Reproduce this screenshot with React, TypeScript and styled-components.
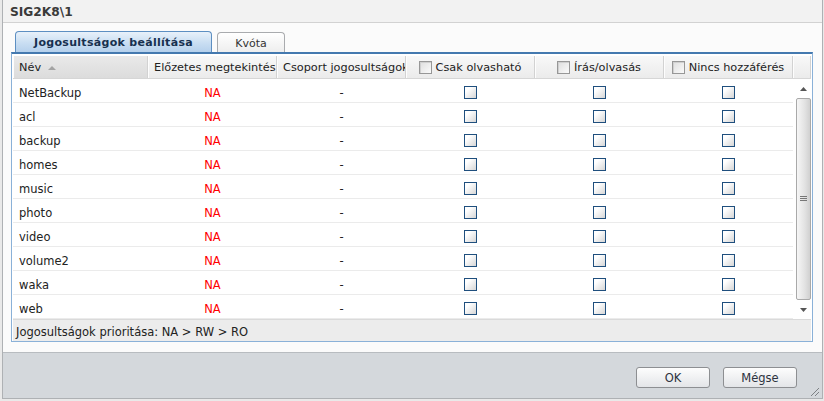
import React from "react";
import styled, { createGlobalStyle } from "styled-components";

const GlobalStyle = createGlobalStyle`
  html, body { margin: 0; padding: 0; background: #e9e9e9; }
  body { font-family: "DejaVu Sans", Verdana, sans-serif; font-size: 11.5px; color: #222; }
  * { box-sizing: border-box; }
`;

const Outer = styled.div`
  width: 824px;
  height: 401px;
  padding: 0 1px 2px 2px;
  background: #e9e9e9;
`;

const Frame = styled.div`
  height: 100%;
  display: flex;
  flex-direction: column;
  border: 1px solid #aeb1b4;
  border-top: none;
  background: #fbfbfb;
`;

const TitleBar = styled.div`
  height: 23px;
  flex: none;
  padding: 2px 0 0 7px;
  display: flex;
  align-items: center;
  font-weight: bold;
  font-size: 12.2px;
  color: #3a3a3a;
  background: #f2f2f2;
  border-bottom: 1px solid #d2d2d2;
`;

const Body = styled.div`
  flex: 1;
  display: flex;
  flex-direction: column;
  padding: 8px 9px 10px 8px;
  background: #fbfbfb;
`;

const TabStrip = styled.div`
  height: 21px;
  display: flex;
  align-items: flex-end;
  gap: 5px;
  padding-left: 4px;
`;

const Tab = styled.div<{ $active?: boolean }>`
  height: ${(p) => (p.$active ? "21px" : "20px")};
  width: ${(p) => (p.$active ? "197px" : "68px")};
  display: flex;
  align-items: center;
  justify-content: center;
  border: 1px solid ${(p) => (p.$active ? "#5d8fc2" : "#a9abae")};
  border-bottom: none;
  border-radius: 4px 4px 0 0;
  background: ${(p) =>
    p.$active
      ? "linear-gradient(#e8f1fa, #c9def2 55%, #b5d0ec)"
      : "linear-gradient(#ffffff, #eeeeee)"};
  font-size: 11px;
  font-weight: ${(p) => (p.$active ? "bold" : "normal")};
  letter-spacing: ${(p) => (p.$active ? "0.3px" : "0")};
  color: ${(p) => (p.$active ? "#17304f" : "#333")};
  padding-top: 1px;
`;

const Panel = styled.div`
  height: 290px;
  border: 1px solid #8ab1d8;
  border-top: 2px solid #4479af;
  padding: 2px 1px 0 1px;
  display: flex;
  flex-direction: column;
  background: #fff;
`;

const HeaderRow = styled.div`
  height: 23px;
  flex: none;
  display: grid;
  grid-template-columns: 135px repeat(5, 129px) 18px;
  background: linear-gradient(#f8f8f8, #ebebeb);
  border-bottom: 1px solid #d6d6d6;
  font-size: 11.3px;
`;

const HeaderCell = styled.div<{ $sorted?: boolean; $center?: boolean }>`
  display: flex;
  align-items: center;
  justify-content: ${(p) => (p.$center ? "center" : "flex-start")};
  padding: 1px ${(p) => (p.$center ? "0" : "6px")} 0;
  padding-right: 0;
  overflow: hidden;
  white-space: nowrap;
  color: #222;
  border-right: 1px solid #d2d2d2;
  box-shadow: inset 1px 0 0 #fdfdfd;
  background: ${(p) => (p.$sorted ? "linear-gradient(#e9e9e9, #dcdcdc)" : "transparent")};
`;

const SortArrow = styled.span`
  width: 0;
  height: 0;
  margin-left: 7px;
  margin-top: 1px;
  border-left: 4px solid transparent;
  border-right: 4px solid transparent;
  border-bottom: 4px solid #a3a3a3;
`;

const HeadCheck = styled.span`
  width: 13px;
  height: 13px;
  flex: none;
  margin-right: 4px;
  margin-top: -1px;
  border: 1px solid #979797;
  box-shadow: inset 1px 1px 0 #cfcfcf;
  background: linear-gradient(135deg, #dedede, #fafafa);
`;

const TableBody = styled.div`
  height: 240px;
  flex: none;
  display: flex;
`;

const Rows = styled.div`
  width: 780px;
  display: flex;
  flex-direction: column;
`;

const Row = styled.div`
  height: 24px;
  flex: none;
  display: grid;
  grid-template-columns: 135px repeat(5, 129px);
  align-items: center;
  padding-top: 4px;
  border-bottom: 1px solid #ebebeb;
`;

const Cell = styled.div<{ $center?: boolean; $red?: boolean }>`
  display: flex;
  justify-content: ${(p) => (p.$center ? "center" : "flex-start")};
  padding: 0 6px;
  color: ${(p) => (p.$red ? "#ff0000" : "#222")};
  white-space: nowrap;
`;

const Check = styled.span`
  width: 13px;
  height: 13px;
  border: 1px solid #1f4f7e;
  background: linear-gradient(135deg, #ffffff 25%, #d6d6d6);
`;

const Scroller = styled.div`
  width: 18px;
  display: flex;
  flex-direction: column;
  padding-left: 3px;
`;

const ArrowBtn = styled.div`
  height: 19px;
  flex: none;
  display: flex;
  align-items: center;
  justify-content: center;
`;

const Thumb = styled.div`
  flex: 1;
  border: 1px solid #a9a9a9;
  border-radius: 2px;
  background: linear-gradient(to right, #f6f6f6, #e2e2e2 60%, #d0d0d0);
  display: flex;
  align-items: center;
  justify-content: center;
`;

const Status = styled.div`
  height: 22px;
  flex: none;
  display: flex;
  align-items: center;
  padding: 3px 0 0 3px;
  background: #ececec;
  border-top: 1px solid #dadada;
  color: #222;
`;

const Footer = styled.div`
  height: 46px;
  flex: none;
  position: relative;
  display: flex;
  justify-content: flex-end;
  align-items: flex-start;
  gap: 13px;
  padding: 14px 25px 0 0;
  background: #d4d8dc;
  border-top: 1px solid #b8bcc0;
`;

const Button = styled.button`
  width: 74px;
  height: 21px;
  border: 1px solid #8d8f92;
  border-radius: 3px;
  background: linear-gradient(#fdfdfd, #e3e5e8);
  font-family: "DejaVu Sans", Verdana, sans-serif;
  font-size: 11.5px;
  color: #2d3340;
  padding: 0;
`;

const Grip = styled.svg`
  position: absolute;
  right: 3px;
  bottom: 2px;
`;

const names = ["NetBackup", "acl", "backup", "homes", "music", "photo", "video", "volume2", "waka", "web"];

export default function App() {
  return (
    <Outer>
      <GlobalStyle />
      <Frame>
        <TitleBar>SIG2K8\1</TitleBar>
        <Body>
          <TabStrip>
            <Tab $active>Jogosultságok beállítása</Tab>
            <Tab>Kvóta</Tab>
          </TabStrip>
          <Panel>
            <HeaderRow>
              <HeaderCell $sorted>
                Név
                <SortArrow />
              </HeaderCell>
              <HeaderCell>Előzetes megtekintés</HeaderCell>
              <HeaderCell>Csoport jogosultságok</HeaderCell>
              <HeaderCell $center>
                <HeadCheck />
                Csak olvasható
              </HeaderCell>
              <HeaderCell $center>
                <HeadCheck />
                Írás/olvasás
              </HeaderCell>
              <HeaderCell $center>
                <HeadCheck />
                Nincs hozzáférés
              </HeaderCell>
              <HeaderCell />
            </HeaderRow>
            <TableBody>
              <Rows>
                {names.map((n) => (
                  <Row key={n}>
                    <Cell>{n}</Cell>
                    <Cell $center $red>NA</Cell>
                    <Cell $center>-</Cell>
                    <Cell $center><Check /></Cell>
                    <Cell $center><Check /></Cell>
                    <Cell $center><Check /></Cell>
                  </Row>
                ))}
              </Rows>
              <Scroller>
                <ArrowBtn>
                  <svg width="7" height="4" viewBox="0 0 7 4"><path d="M0 4 L3.5 0 L7 4 Z" fill="#555" /></svg>
                </ArrowBtn>
                <Thumb>
                  <svg width="7" height="6" viewBox="0 0 7 6">
                    <path d="M0 0.5 H7 M0 2.5 H7 M0 4.5 H7" stroke="#777" strokeWidth="1" />
                  </svg>
                </Thumb>
                <ArrowBtn>
                  <svg width="7" height="4" viewBox="0 0 7 4"><path d="M0 0 L3.5 4 L7 0 Z" fill="#555" /></svg>
                </ArrowBtn>
              </Scroller>
            </TableBody>
            <Status>Jogosultságok prioritása: NA &gt; RW &gt; RO</Status>
          </Panel>
        </Body>
        <Footer>
          <Button>OK</Button>
          <Button>Mégse</Button>
          <Grip width="9" height="9" viewBox="0 0 9 9">
            <path d="M1 9 L9 1 M5 9 L9 5" stroke="#7d8184" strokeWidth="1" />
          </Grip>
        </Footer>
      </Frame>
    </Outer>
  );
}
